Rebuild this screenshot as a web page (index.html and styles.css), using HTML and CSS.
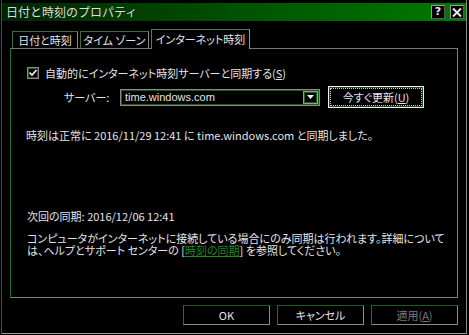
FILE: index.html
```html
<!DOCTYPE html>
<html lang="ja">

<head>
  <meta charset="UTF-8">
  <title>日付と時刻のプロパティ</title>
  <link rel="stylesheet" href="styles.css">
</head>

<body>
  <div class="window">
    <!-- title bar -->
    <div class="titlebar">
      <span class="title">日付と時刻のプロパティ</span>
      <div class="title-btns">
        <span class="tbtn help">?</span>
        <span class="tbtn">
          <svg width="10" height="9" viewBox="0 0 10 9">
            <path d="M1 0.5 L9 8.5 M9 0.5 L1 8.5" stroke="#e8e8e8" stroke-width="2" />
          </svg>
        </span>
      </div>
    </div>

    <!-- tabs -->
    <div class="tabs">
      <div class="tab tab-date">日付と時刻</div>
      <div class="tab tab-zone">タイム ゾーン</div>
      <div class="tab tab-active">インターネット時刻</div>
    </div>

    <div class="panel">
      <div class="check-row">
        <span class="checkbox">
          <svg width="8" height="8" viewBox="0 0 8 8">
            <path d="M0.5 3.5 L3 6 L7.5 1" fill="none" stroke="#f0f0f0" stroke-width="1.6" />
          </svg>
        </span>
        <span class="label">自動的にインターネット時刻サーバーと同期する(<u>S</u>)</span>
      </div>

      <div class="server-row">
        <span class="server-label">サーバー:</span>
        <div class="combo">
          <span class="combo-text">time.windows.com</span>
          <span class="combo-btn">
            <svg width="7" height="4" viewBox="0 0 7 4">
              <path d="M0 0 H7 L3.5 4 Z" fill="#f0f0f0" />
            </svg>
          </span>
        </div>
        <div class="update-btn"><span class="focus">今すぐ更新(<u>U</u>)</span></div>
      </div>

      <div class="sync-msg">時刻は正常に 2016/11/29 12:41 に time.windows.com と同期しました。</div>

      <div class="next-sync">次回の同期: 2016/12/06 12:41</div>
      <div class="note">
        <div class="note-line">コンピュータがインターネットに接続している場合にのみ同期は行われます。詳細について</div>
        <div class="note-line">は、ヘルプとサポート センターの [<span class="link">時刻の同期</span>] を参照してください。</div>
      </div>
    </div>

    <div class="actions">
      <div class="btn">OK</div>
      <div class="btn">キャンセル</div>
      <div class="btn disabled">適用(<u>A</u>)</div>
    </div>
  </div>
</body>

</html>
```

FILE: styles.css
```css
/* whole page is the dialog on black */
body {
  margin: 0;
  background: #000;
  color: #e4e4e4;
  font-family: "Noto Sans CJK JP", "Liberation Sans", sans-serif;
  font-size: 11px;
  line-height: 12px;
}

.window {
  margin-left: 1px;
  width: 466px;
  height: 334px;
  box-sizing: border-box;
  border-left: 1px solid #1c6a1c;
  border-right: 1px solid #8a8a8a;
  border-bottom: 1px solid #9a9a9a;
  padding-top: 3px;
}

/* title bar */
.titlebar {
  height: 18px;
  display: flex;
  align-items: center;
  justify-content: space-between;
  background: linear-gradient(to right, #002400, #005a00 60%, #007a00);
  padding-left: 4px;
}

.title {
  color: #dcdcdc;
  font-size: 12px;
}

.title-btns {
  display: flex;
  gap: 5px;
  margin-right: 2px;
}

.tbtn {
  width: 14px;
  height: 14px;
  box-sizing: border-box;
  background: #000;
  border: 1px solid #5a5a5a;
  border-top-color: #9a9a9a;
  border-left-color: #9a9a9a;
  display: flex;
  align-items: center;
  justify-content: center;
  color: #e8e8e8;
}

.help {
  font-family: "DejaVu Sans", sans-serif;
  font-weight: bold;
  font-size: 11px;
}

/* tabs */
.tabs {
  display: flex;
  align-items: flex-end;
  height: 19px;
  margin-top: 8px;
  padding-left: 10px;
  position: relative;
  z-index: 1;
}

.tab {
  height: 17px;
  box-sizing: border-box;
  border: 1px solid #3f6a3f;
  border-right-color: #8a8a8a;
  border-bottom: none;
  display: flex;
  align-items: center;
  justify-content: center;
  white-space: nowrap;
  font-feature-settings: "palt";
}

.tab-date {
  width: 66px;
}

.tab-zone {
  width: 69px;
  margin-left: 2px;
}

.tab-active {
  width: 99px;
  height: 20px;
  margin-left: 2px;
  margin-bottom: -1px;
  background: #000;
  border-color: #5a7a5a;
  border-right-color: #9a9a9a;
  padding-bottom: 1px;
}

/* tab page */
.panel {
  margin-left: 8px;
  width: 448px;
  height: 250px;
  box-sizing: border-box;
  border: 1px solid #808080;
  border-top-color: #6e7e6e;
  border-left-color: #2a6e2a;
  padding-left: 16px;
  white-space: nowrap;
  font-feature-settings: "palt";
}

.check-row {
  margin-top: 18px;
  height: 12px;
  display: flex;
  align-items: center;
}

.checkbox {
  width: 12px;
  height: 12px;
  box-sizing: border-box;
  border: 1px solid #8a8a8a;
  box-shadow: inset 0 0 0 1px #1f5a1f;
  display: flex;
  align-items: center;
  justify-content: center;
}

.check-row .label {
  margin-left: 6px;
}

.server-row {
  margin-top: 7px;
  height: 22px;
  display: flex;
  align-items: center;
}

.server-label {
  margin-left: 37px;
  width: 56px;
}

.combo {
  width: 200px;
  height: 17px;
  box-sizing: border-box;
  border: 1px solid #8a8a8a;
  box-shadow: inset 0 0 0 1px #1c5a1c;
  display: flex;
  align-items: center;
  justify-content: space-between;
  padding: 0 1px 0 4px;
}

.combo-text {
  font-family: "Liberation Sans", sans-serif;
  font-size: 11px;
}

.combo-btn {
  width: 15px;
  height: 13px;
  box-sizing: border-box;
  border: 1px solid #9a9a9a;
  box-shadow: inset 0 0 0 1px #1c5a1c;
  display: flex;
  align-items: center;
  justify-content: center;
}

.update-btn {
  margin-left: 8px;
  width: 96px;
  height: 22px;
  box-sizing: border-box;
  border: 1px solid #f0f0f0;
  padding: 1px;
  display: flex;
}

.update-btn .focus {
  flex: 1;
  border: 1px dotted #d0d0d0;
  box-shadow: 0 0 0 1px #1c4a1c;
  display: flex;
  align-items: center;
  justify-content: center;
}

.sync-msg {
  margin-top: 21px;
  margin-left: -1px;
}

.next-sync {
  margin-top: 69px;
}

.note {
  margin-top: 10px;
}

.note-line {
  height: 12px;
}

.link {
  color: #1f8a1f;
  text-decoration: underline;
}

/* bottom buttons */
.actions {
  display: flex;
  justify-content: flex-end;
  gap: 7px;
  margin-top: 7px;
  padding-right: 8px;
}

.btn {
  width: 87px;
  height: 20px;
  box-sizing: border-box;
  border: 1px solid #8a8a8a;
  border-top-color: #1f5a1f;
  border-left-color: #2a6e2a;
  display: flex;
  align-items: center;
  justify-content: center;
  font-feature-settings: "palt";
}

.disabled {
  color: #7a7a7a;
}
```
